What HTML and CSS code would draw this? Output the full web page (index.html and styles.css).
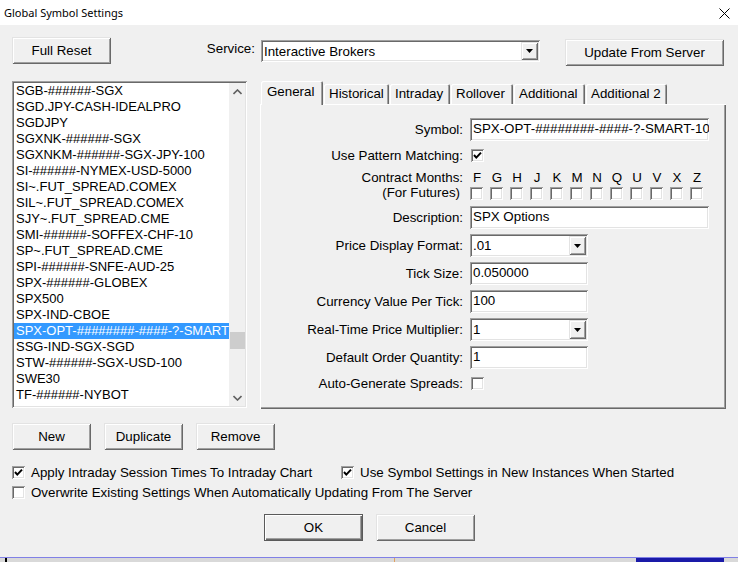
FILE: index.html
```html
<!DOCTYPE html>
<html>
<head>
<meta charset="utf-8">
<title>Global Symbol Settings</title>
<link rel="stylesheet" href="styles.css">
</head>
<body>
<div class="window">
  <div class="titlebar">
    <span class="title">Global Symbol Settings</span>
    <svg class="close" width="11" height="11" viewBox="0 0 11 11"><path d="M0.5 0.5L10.5 10.5M10.5 0.5L0.5 10.5" stroke="#000" stroke-width="1" fill="none"/></svg>
  </div>
  <div class="content">
    <div class="toprow">
      <button class="btn btn-reset">Full Reset</button>
      <span class="service-label">Service:</span>
      <div class="select service-select">
        <span class="select-text">Interactive Brokers</span>
        <span class="drop"><svg width="7" height="4" viewBox="0 0 7 4"><polygon points="0,0 7,0 3.5,4" fill="#000"/></svg></span>
      </div>
      <button class="btn btn-update">Update From Server</button>
    </div>

    <div class="main">
      <div class="list">
        <div class="items">
          <div class="item">SGB-######-SGX</div>
          <div class="item">SGD.JPY-CASH-IDEALPRO</div>
          <div class="item">SGDJPY</div>
          <div class="item">SGXNK-######-SGX</div>
          <div class="item">SGXNKM-######-SGX-JPY-100</div>
          <div class="item">SI-######-NYMEX-USD-5000</div>
          <div class="item">SI~.FUT_SPREAD.COMEX</div>
          <div class="item">SIL~.FUT_SPREAD.COMEX</div>
          <div class="item">SJY~.FUT_SPREAD.CME</div>
          <div class="item">SMI-######-SOFFEX-CHF-10</div>
          <div class="item">SP~.FUT_SPREAD.CME</div>
          <div class="item">SPI-######-SNFE-AUD-25</div>
          <div class="item">SPX-######-GLOBEX</div>
          <div class="item">SPX500</div>
          <div class="item">SPX-IND-CBOE</div>
          <div class="item selected">SPX-OPT-########-####-?-SMART</div>
          <div class="item">SSG-IND-SGX-SGD</div>
          <div class="item">STW-######-SGX-USD-100</div>
          <div class="item">SWE30</div>
          <div class="item">TF-######-NYBOT</div>
          <div class="item">TICKPA-NYSE</div>
        </div>
        <div class="scrollbar">
          <div class="sb-arrow"><svg width="9" height="6" viewBox="0 0 9 6"><polyline points="0.5,5 4.5,1 8.5,5" fill="none" stroke="#606060" stroke-width="1.6"/></svg></div>
          <div class="sb-track"><div class="sb-thumb"></div></div>
          <div class="sb-arrow"><svg width="9" height="6" viewBox="0 0 9 6"><polyline points="0.5,1 4.5,5 8.5,1" fill="none" stroke="#606060" stroke-width="1.6"/></svg></div>
        </div>
      </div>

      <div class="tabs">
        <div class="tabstrip">
          <div class="tab active t-general">General</div>
          <div class="tab t-historical">Historical</div>
          <div class="tab t-intraday">Intraday</div>
          <div class="tab t-rollover">Rollover</div>
          <div class="tab t-additional">Additional</div>
          <div class="tab t-additional2">Additional 2</div>
        </div>
        <div class="panel">
          <div class="row r-symbol">
            <div class="label">Symbol:</div>
            <div class="field wide">SPX-OPT-########-####-?-SMART-100</div>
          </div>
          <div class="row r-pattern">
            <div class="label">Use Pattern Matching:</div>
            <span class="cb checked"><svg width="9" height="9" viewBox="0 0 9 9"><polyline points="1,4 3.3,6.6 8,1.6" fill="none" stroke="#000" stroke-width="2"/></svg></span>
          </div>
          <div class="row r-months">
            <div class="label two">
              <div>Contract Months:</div>
              <div class="ff">(For Futures)</div>
            </div>
            <div class="months">
              <span class="m">F</span><span class="m">G</span><span class="m">H</span><span class="m">J</span><span class="m">K</span><span class="m">M</span><span class="m">N</span><span class="m">Q</span><span class="m">U</span><span class="m">V</span><span class="m">X</span><span class="m">Z</span>
              <span class="cb"></span><span class="cb"></span><span class="cb"></span><span class="cb"></span><span class="cb"></span><span class="cb"></span><span class="cb"></span><span class="cb"></span><span class="cb"></span><span class="cb"></span><span class="cb"></span><span class="cb"></span>
            </div>
          </div>
          <div class="row r-desc">
            <div class="label">Description:</div>
            <div class="field wide">SPX Options</div>
          </div>
          <div class="row r-std">
            <div class="label">Price Display Format:</div>
            <div class="select narrow">
              <span class="select-text">.01</span>
              <span class="drop"><svg width="7" height="4" viewBox="0 0 7 4"><polygon points="0,0 7,0 3.5,4" fill="#000"/></svg></span>
            </div>
          </div>
          <div class="row r-std">
            <div class="label">Tick Size:</div>
            <div class="field narrow">0.050000</div>
          </div>
          <div class="row r-std">
            <div class="label">Currency Value Per Tick:</div>
            <div class="field narrow">100</div>
          </div>
          <div class="row r-std">
            <div class="label">Real-Time Price Multiplier:</div>
            <div class="select narrow">
              <span class="select-text">1</span>
              <span class="drop"><svg width="7" height="4" viewBox="0 0 7 4"><polygon points="0,0 7,0 3.5,4" fill="#000"/></svg></span>
            </div>
          </div>
          <div class="row r-std">
            <div class="label">Default Order Quantity:</div>
            <div class="field narrow">1</div>
          </div>
          <div class="row r-auto">
            <div class="label">Auto-Generate Spreads:</div>
            <span class="cb"></span>
          </div>
        </div>
      </div>
    </div>

    <div class="actions">
      <button class="btn btn-small">New</button>
      <button class="btn btn-small">Duplicate</button>
      <button class="btn btn-small">Remove</button>
    </div>

    <div class="opts">
      <div class="opt opt-first">
        <span class="cb checked"><svg width="9" height="9" viewBox="0 0 9 9"><polyline points="1,4 3.3,6.6 8,1.6" fill="none" stroke="#000" stroke-width="2"/></svg></span>
        <span class="opt-text">Apply Intraday Session Times To Intraday Chart</span>
      </div>
      <div class="opt">
        <span class="cb checked"><svg width="9" height="9" viewBox="0 0 9 9"><polyline points="1,4 3.3,6.6 8,1.6" fill="none" stroke="#000" stroke-width="2"/></svg></span>
        <span class="opt-text">Use Symbol Settings in New Instances When Started</span>
      </div>
      <div class="opt opt-full">
        <span class="cb"></span>
        <span class="opt-text">Overwrite Existing Settings When Automatically Updating From The Server</span>
      </div>
    </div>

    <div class="dialog-buttons">
      <button class="btn btn-dialog default">OK</button>
      <button class="btn btn-dialog">Cancel</button>
    </div>
  </div>
  <div class="footer-strip">
    <span class="fs-mark"></span>
    <span class="fs-sep"></span>
    <span class="fs-block"></span>
  </div>
</div>
</body>
</html>
```

FILE: styles.css
```css
* { box-sizing: border-box; }
html, body { margin: 0; padding: 0; }
body {
  width: 738px;
  height: 562px;
  overflow: hidden;
  background: #f0f0f0;
  color: #000;
  font-family: "Liberation Sans", Arial, sans-serif;
  font-size: 13.33px;
}
.window {
  width: 738px;
  height: 562px;
  display: flex;
  flex-direction: column;
  background: #f0f0f0;
}

/* title bar */
.titlebar {
  flex: none;
  height: 25px;
  background: #fff;
  display: flex;
  align-items: center;
  justify-content: space-between;
  padding: 0 8px 0 4px;
}
.title {
  font-family: "Noto Sans", "Liberation Sans", sans-serif;
  font-size: 11px;
  color: #000;
}
.close { display: block; margin-top: 1px; }

.content {
  padding: 0 12px;
  display: flex;
  flex-direction: column;
}

/* 3D looks */
.btn {
  font: inherit;
  color: #000;
  background: #f0f0f0;
  border: none;
  padding: 0;
  margin: 0;
  display: flex;
  align-items: center;
  justify-content: center;
  box-shadow: inset 1px 1px #e3e3e3, inset -1px -1px #696969, inset 2px 2px #fff, inset -2px -2px #a0a0a0;
}
.btn.default {
  box-shadow: inset 0 0 0 1px #5a5a5a, inset 2px 2px #fff, inset -2px -2px #696969, inset -3px -3px #a0a0a0;
}

/* top row */
.toprow {
  display: flex;
  align-items: flex-start;
  margin-top: 12px;
  height: 29px;
}
.btn-reset { width: 99px; height: 27px; }
.service-label {
  width: 150px;
  text-align: right;
  padding-right: 6px;
  margin-top: 4px;
  line-height: 16px;
}
.select {
  display: flex;
  align-items: stretch;
  background: #fff;
  padding: 2px;
  box-shadow: inset 1px 1px #a0a0a0, inset -1px -1px #fff, inset 2px 2px #696969, inset -2px -2px #e3e3e3;
}
.select-text {
  flex: 1;
  padding-left: 1px;
  line-height: 19px;
  white-space: nowrap;
  overflow: hidden;
}
.drop {
  width: 17px;
  flex: none;
  display: flex;
  align-items: center;
  justify-content: center;
  background: #f0f0f0;
  box-shadow: inset 1px 1px #e3e3e3, inset -1px -1px #696969, inset 2px 2px #fff, inset -2px -2px #a0a0a0;
}
.drop svg { display: block; }
.service-select { width: 279px; height: 22px; margin-top: 3px; }
.btn-update { width: 159px; height: 27px; margin-top: 2px; margin-left: 25px; }

/* main */
.main {
  display: flex;
  margin-top: 15px;
  height: 328px;
}
.list {
  width: 235px;
  height: 327px;
  background: #fff;
  padding: 2px;
  display: flex;
  box-shadow: inset 1px 1px #a0a0a0, inset -1px -1px #fff, inset 2px 2px #696969, inset -2px -2px #e3e3e3;
}
.items {
  width: 215px;
  overflow: hidden;
}
.item {
  height: 16px;
  line-height: 16px;
  font-size: 13px;
  padding-left: 2px;
  white-space: nowrap;
  overflow: hidden;
}
.item.selected {
  background: #3399ff;
  color: #fff;
}
.scrollbar {
  width: 16px;
  background: #f0f0f0;
  display: flex;
  flex-direction: column;
}
.sb-arrow {
  height: 17px;
  display: flex;
  align-items: center;
  justify-content: center;
}
.sb-arrow svg { display: block; }
.sb-track { flex: 1; padding-top: 232px; padding-left: 1px; }
.sb-thumb { width: 15px; height: 17px; background: #cdcdcd; }

/* tabs */
.tabs {
  margin-left: 13px;
  width: 466px;
  display: flex;
  flex-direction: column;
}
.tabstrip {
  height: 23px;
  display: flex;
  align-items: flex-end;
  gap: 1px;
  padding-left: 1px;
}
.tab {
  height: 20px;
  line-height: 20px;
  padding-left: 5px;
  white-space: nowrap;
  background: #f0f0f0;
  box-shadow: inset 1px 1px #fff, inset -1px 0 #696969, inset -2px 0 #a0a0a0;
  border-top-left-radius: 2px;
  border-top-right-radius: 2px;
}
.tab.active {
  height: 24px;
  line-height: 22px;
  margin-bottom: -1px;
  position: relative;
  z-index: 1;
  padding-left: 6px;
}
.t-general { width: 62px; }
.t-historical { width: 65px; }
.t-intraday { width: 60px; }
.t-rollover { width: 62px; }
.t-additional { width: 71px; }
.t-additional2 { width: 81px; }

.panel {
  height: 305px;
  padding-top: 14px;
  box-shadow: inset 1px 1px #fff, inset -1px -1px #696969, inset -2px -2px #a0a0a0;
  display: flex;
  flex-direction: column;
}
.row {
  display: flex;
  align-items: center;
  flex: none;
}
.label {
  width: 203px;
  text-align: right;
  margin-right: 7px;
  white-space: nowrap;
}
.r-symbol { height: 23px; }
.r-pattern { height: 17px; margin-top: 6px; }
.r-months { height: 29px; margin-top: 7px; align-items: flex-start; }
.r-desc { height: 23px; margin-top: 6px; }
.r-std { height: 23px; margin-top: 5px; }
.r-auto { height: 18px; margin-top: 5px; }

.label.two div { height: 15px; line-height: 15px; }
.label.two div:first-child { height: 14px; line-height: 14px; }
.label.two .ff { padding-right: 3px; }

.field {
  height: 23px;
  line-height: 22px;
  padding: 0 3px;
  background: #fff;
  white-space: nowrap;
  overflow: hidden;
  box-shadow: inset 1px 1px #a0a0a0, inset -1px -1px #fff, inset 2px 2px #696969, inset -2px -2px #e3e3e3;
}
.wide { width: 239px; }
.narrow { width: 118px; }
.select.narrow { height: 23px; }

.cb {
  width: 13px;
  height: 13px;
  flex: none;
  background: #fff;
  display: inline-flex;
  align-items: center;
  justify-content: center;
  box-shadow: inset 1px 1px #a0a0a0, inset -1px -1px #fff, inset 2px 2px #696969, inset -2px -2px #e3e3e3;
}
.cb svg { display: block; }
.r-pattern .cb, .r-auto .cb { margin-left: 1px; }

.months {
  display: grid;
  grid-template-columns: repeat(12, 20px);
  grid-template-rows: 14px 15px;
}
.m {
  width: 13px;
  text-align: center;
  line-height: 14px;
  padding-left: 1px;
}
.months .cb { margin-top: 2px; }

/* actions */
.actions {
  display: flex;
  gap: 13px;
  margin-top: 14px;
}
.btn-small { width: 79px; height: 27px; }

.opts {
  display: grid;
  grid-template-columns: 329px auto;
  grid-auto-rows: 20px;
  margin-top: 12px;
}
.opt {
  display: flex;
  align-items: center;
  white-space: nowrap;
}
.opt-full { grid-column: 1 / span 2; }
.opt-text { margin-left: 6px; }

.dialog-buttons {
  display: flex;
  justify-content: center;
  gap: 13px;
  margin-top: 12px;
  padding-left: 1px;
}
.btn-dialog { width: 99px; height: 27px; }

/* bottom edge of the window behind */
.footer-strip {
  margin-top: auto;
  height: 5px;
  border-top: 1px solid #8080e6;
  background: #d9d9d9;
  display: flex;
  align-items: stretch;
}
.fs-mark { width: 2px; margin-left: 5px; background: #000; }
.fs-sep { width: 1px; margin-left: 387px; background: #e0a060; }
.fs-block { width: 88px; margin-left: 241px; background: #1a1aa8; }
```
